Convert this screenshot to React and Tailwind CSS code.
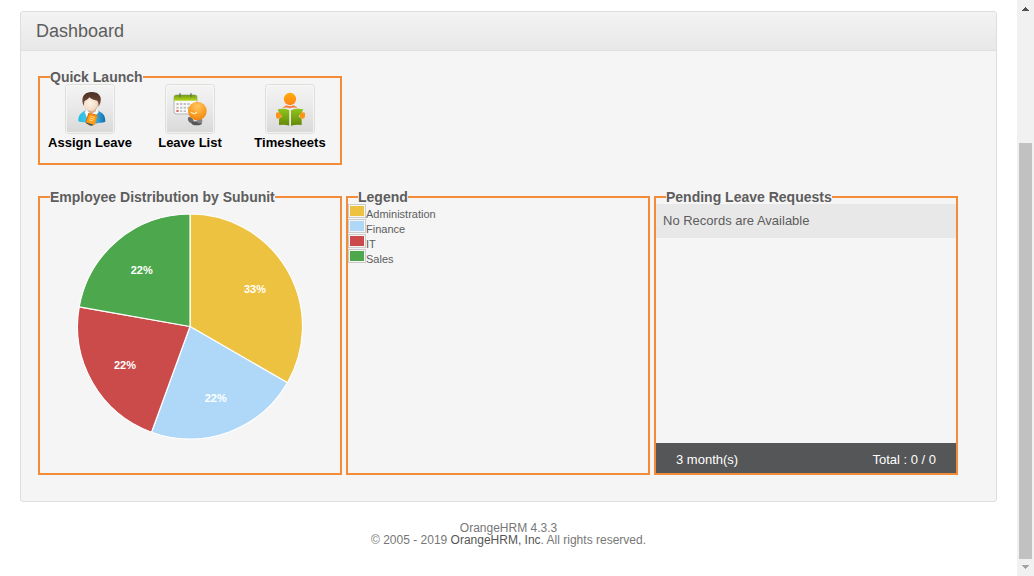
const slices = [
  { name: 'Administration', share: 3, label: '33%', color: '#edc240', swatch: 'bg-[#edc240]' },
  { name: 'Finance', share: 2, label: '22%', color: '#afd8f8', swatch: 'bg-[#afd8f8]' },
  { name: 'IT', share: 2, label: '22%', color: '#cb4b4b', swatch: 'bg-[#cb4b4b]' },
  { name: 'Sales', share: 2, label: '22%', color: '#4da74d', swatch: 'bg-[#4da74d]' },
];

function Tile({ id, children }) {
  return (
    <svg viewBox="9 6 150 150" className="block h-[50px] w-[50px]" aria-hidden="true">
      <defs>
        <linearGradient id={id} x1="0" y1="0" x2="0" y2="1">
          <stop offset="0" stopColor="#f4f4f4" />
          <stop offset="0.5" stopColor="#e8e8e8" />
          <stop offset="1" stopColor="#d9d9d9" />
        </linearGradient>
      </defs>
      <rect x="10.5" y="7.5" width="147" height="147" rx="9" fill="#fafaf8" stroke="#dfdfda" strokeWidth="3" />
      <rect x="14" y="11" width="140" height="140" rx="6" fill={`url(#${id})`} />
      {children}
    </svg>
  );
}

function AssignLeaveIcon() {
  return (
    <Tile id="tileAssign">
      <defs>
        <linearGradient id="shirt" x1="0" y1="0" x2="1" y2="0">
          <stop offset="0" stopColor="#22c0e2" />
          <stop offset="0.5" stopColor="#5cc4ea" />
          <stop offset="1" stopColor="#0d6fae" />
        </linearGradient>
        <linearGradient id="tag" x1="0" y1="0" x2="0" y2="1">
          <stop offset="0" stopColor="#ff8a00" />
          <stop offset="1" stopColor="#ffa81a" />
        </linearGradient>
        <radialGradient id="face" cx="0.45" cy="0.5" r="0.65">
          <stop offset="0" stopColor="#fdf3e8" />
          <stop offset="0.65" stopColor="#f5dcc6" />
          <stop offset="1" stopColor="#c99a78" />
        </radialGradient>
        <linearGradient id="hair" x1="0" y1="0" x2="0" y2="1">
          <stop offset="0" stopColor="#4a3027" />
          <stop offset="1" stopColor="#7d503b" />
        </linearGradient>
      </defs>
      <path d="M49 118 C48 98 58 92 72 84 L103 84 C122 92 130 98 130 119 C119 124 112 120 108 124 L86 127 C75 119 60 123 49 118Z" fill="url(#shirt)" />
      <path d="M76 80 L104 80 L110 90 L99 104 L88 97 L76 110 L68 90Z" fill="#f8faf8" />
      <path d="M77 78 C83 91 94 91 103 78 L102 87 L88 97 L77 87Z" fill="#d9a98a" />
      <ellipse cx="87" cy="63" rx="23" ry="24" fill="url(#face)" />
      <path d="M65 72 C56 50 63 31 87 30 C110 29 121 44 115 62 L110 75 C110 65 109 60 106 56 C94 55 86 50 82 46 C78 53 70 54 67 58Z" fill="url(#hair)" />
      <g transform="rotate(17 87 112)">
        <path d="M74 96 L100 94 L102 125 L90 131 L74 127Z" fill="#c75505" />
        <path d="M76 96 H102 V125 H76Z" fill="url(#tag)" />
        <path d="M82 103 H97 M82 109 H97 M82 115 H94" stroke="#ffe09a" strokeWidth="2.5" />
        <path d="M75 124 H98 L96 129 L78 128Z" fill="#1e5572" />
        <path d="M76 118 H102 V125 H76Z" fill="#ff9c12" />
      </g>
    </Tile>
  );
}

function LeaveListIcon() {
  return (
    <Tile id="tileList">
      <defs>
        <linearGradient id="calTop" x1="0" y1="0" x2="0" y2="1">
          <stop offset="0" stopColor="#6f9c12" />
          <stop offset="1" stopColor="#b6d420" />
        </linearGradient>
        <radialGradient id="ball" cx="0.5" cy="0.25" r="0.75">
          <stop offset="0" stopColor="#ffc765" />
          <stop offset="0.55" stopColor="#fca32a" />
          <stop offset="1" stopColor="#ee8611" />
        </radialGradient>
      </defs>
      <rect x="36" y="39" width="69" height="57" rx="7" fill="#f9f9f9" stroke="#b1b5b9" strokeWidth="3" />
      <path d="M36 56 V46 Q36 39 44 39 H97 Q105 39 105 46 V56Z" fill="url(#calTop)" />
      <path d="M54 35 V44 M87 35 V44" stroke="#68705b" strokeWidth="4" strokeLinecap="round" />
      <path d="M54 63h7v6h-7z M65 63h7v6h-7z M76 63h7v6h-7z M54 74h7v6h-7z M65 74h7v6h-7z M76 74h7v6h-7z M54 85h7v5h-7z M65 85h7v5h-7z" fill="#bfc3c6" />
      <path d="M43 63h7v6h-7z M43 74h7v6h-7z" fill="#cfbcb8" />
      <path d="M43 84h7v6h-7z" fill="#df6b60" />
      <path d="M79 106 C86 101 96 112 96 122 C85 129 74 115 79 106Z" fill="#66676a" />
      <ellipse cx="104" cy="124" rx="15" ry="6" fill="#555" />
      <ellipse cx="113" cy="116" rx="8" ry="8" fill="#85858a" />
      <circle cx="106" cy="87" r="28" fill="url(#ball)" />
      <path d="M87 90 Q96 99 105 91" fill="none" stroke="#fff0ba" strokeWidth="4" />
      <path d="M86 86 Q93 92 99 90" fill="none" stroke="#e08e2b" strokeWidth="2" />
    </Tile>
  );
}

function TimesheetsIcon() {
  return (
    <Tile id="tileTime">
      <defs>
        <linearGradient id="book" x1="0" y1="0" x2="0" y2="1">
          <stop offset="0" stopColor="#8fc51d" />
          <stop offset="1" stopColor="#648708" />
        </linearGradient>
        <linearGradient id="orangeHead" x1="0" y1="0" x2="0" y2="1">
          <stop offset="0" stopColor="#ffac0a" />
          <stop offset="1" stopColor="#ff8518" />
        </linearGradient>
      </defs>
      <circle cx="84" cy="51" r="18.5" fill="url(#orangeHead)" />
      <path d="M59 80 Q68 73 74 70 Q84 76 94 70 Q101 73 109 80 Q95 74 84 79 Q73 74 59 80Z" fill="#f77c3b" />
      <path d="M47 82 Q67 78 82 85 V131 Q67 126 51 129 V111 L60 103 L51 92Z" fill="url(#book)" />
      <path d="M124 82 Q102 78 87 85 V131 Q104 126 119 129 V111 L110 103 L119 92Z" fill="url(#book)" />
      <path d="M84 81 V132" stroke="#e8efdb" strokeWidth="3" />
      <path d="M42 98 Q41 91 47 91 Q59 92 58 103 Q56 112 47 110 Q41 108 42 98Z M129 98 Q130 91 123 91 Q112 92 113 103 Q115 112 123 110 Q130 108 129 98Z" fill="#ff9318" />
    </Tile>
  );
}

function Panel({ title, className, children }) {
  return (
    <fieldset className={`w-[304px] border-2 border-[#f28c38] ${className}`}>
      <legend className="relative ml-[10px] text-sm leading-[14px] font-bold">{title}</legend>
      {children}
    </fieldset>
  );
}

function PieChart() {
  const cx = 150;
  const cy = 122.5;
  const r = 112.5;
  const total = slices.reduce((sum, s) => sum + s.share, 0);
  const point = (fraction, radius) => {
    const a = fraction * 2 * Math.PI - Math.PI / 2;
    return [cx + radius * Math.cos(a), cy + radius * Math.sin(a)];
  };
  let start = 0;
  return (
    <svg viewBox="0 0 300 260" className="block w-full" role="img" aria-label="Employee Distribution by Subunit">
      {slices.map((s) => {
        const end = start + s.share / total;
        const [x1, y1] = point(start, r);
        const [x2, y2] = point(end, r);
        const [tx, ty] = point((start + end) / 2, r * 0.667);
        start = end;
        return (
          <g key={s.name}>
            <path d={`M${cx} ${cy} L${x1} ${y1} A${r} ${r} 0 0 1 ${x2} ${y2}Z`} fill={s.color} stroke="#fff" strokeWidth="1.2" strokeLinejoin="round" />
            <text x={tx} y={ty + 4.5} textAnchor="middle" fill="#fff" className="text-[11px] font-bold">
              {s.label}
            </text>
          </g>
        );
      })}
    </svg>
  );
}

const shortcuts = [
  { label: 'Assign Leave', Icon: AssignLeaveIcon },
  { label: 'Leave List', Icon: LeaveListIcon },
  { label: 'Timesheets', Icon: TimesheetsIcon },
];

export default function App() {
  return (
    <div className="flex min-h-screen bg-white font-['Liberation_Sans',Arial,sans-serif] text-[#5d5d5d]">
      <div className="min-w-0 flex-1 px-5 pt-[11px]">
        <main className="rounded-[3px] border border-[#dedede] bg-[#f5f5f5]">
          <header className="rounded-t-[3px] border-b border-[#dedede] bg-linear-to-b from-[#f3f3f3] to-[#e8e8e8] px-[15px]">
            <h1 className="text-lg leading-[38px]">Dashboard</h1>
          </header>
          <div className="px-[17px] pt-[19px] pb-[26px]">
            <Panel title="Quick Launch" className="h-[95px]">
              <nav className="grid grid-cols-3">
                {shortcuts.map(({ label, Icon }) => (
                  <a key={label} href="#" className="flex flex-col items-center text-[13px] leading-[18px] font-bold text-black">
                    <Icon />
                    {label}
                  </a>
                ))}
              </nav>
            </Panel>
            <div className="mt-[25px] flex flex-wrap gap-1">
              <Panel title="Employee Distribution by Subunit" className="h-[285px]">
                <PieChart />
              </Panel>
              <Panel title="Legend" className="h-[285px]">
                <ul className="flex flex-col gap-px text-[11px]">
                  {slices.map((s) => (
                    <li key={s.name} className="flex h-[14px]">
                      <span className="h-[14px] w-[18px] border border-[#ccc] p-px">
                        <span className={`block h-full ${s.swatch}`} />
                      </span>
                      <span className="pt-1 leading-[13px]">{s.name}</span>
                    </li>
                  ))}
                </ul>
              </Panel>
              <Panel title="Pending Leave Requests" className="h-[285px]">
                <div className="flex h-full flex-col justify-between">
                  <p className="bg-[#e8e8e8] px-[7px] text-[13px] leading-[34px]">No Records are Available</p>
                  <div className="flex justify-between bg-[#555658] px-5 pt-0.5 text-[13px] leading-7 text-white">
                    <span className="pt-px leading-[27px]">3 month(s)</span>
                    <span className="pt-px leading-[27px]">Total : 0 / 0</span>
                  </div>
                </div>
              </Panel>
            </div>
          </div>
        </main>
        <footer className="pt-5 text-center text-xs leading-3 text-[#777]">
          <p>OrangeHRM 4.3.3</p>
          <p>
            © 2005 - 2019 <a href="#" className="text-[#555]">OrangeHRM, Inc</a>. All rights reserved.
          </p>
        </footer>
      </div>
      <div className="flex w-[17px] flex-col bg-[#f1f1f1]" aria-hidden="true">
        <svg viewBox="0 0 17 17" className="h-[17px] w-[17px]" shapeRendering="crispEdges">
          <path d="M8 7h1v1h1v1h1v1h1v1H5v-1h1V9h1V8h1z" fill="#505050" />
        </svg>
        <div className="grow-[126]" />
        <div className="mx-0.5 grow-[416] bg-[#c1c1c1]" />
        <svg viewBox="0 0 17 17" className="h-[17px] w-[17px]" shapeRendering="crispEdges">
          <path d="M5 6h7v1h-1v1h-1v1H9v1H8V9H7V8H6V7H5z" fill="#a3a3a3" />
        </svg>
      </div>
    </div>
  );
}
